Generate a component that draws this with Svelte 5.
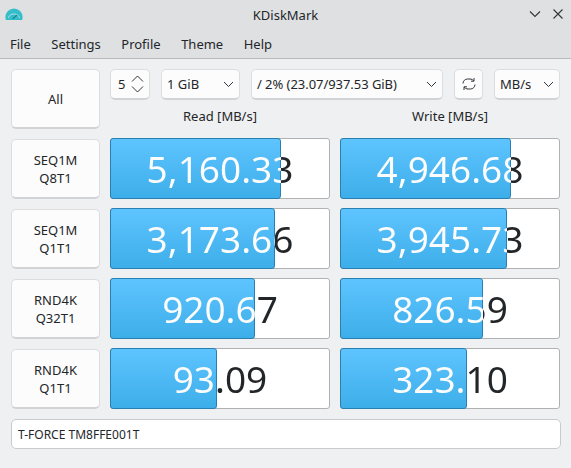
<script>
	const menus = ['File', 'Settings', 'Profile', 'Theme', 'Help'];
	const rows = [
		{ label: ['SEQ1M', 'Q8T1'], read: '5,160.33', readW: 171, write: '4,946.68', writeW: 171 },
		{ label: ['SEQ1M', 'Q1T1'], read: '3,173.66', readW: 165, write: '3,945.73', writeW: 167 },
		{ label: ['RND4K', 'Q32T1'], read: '920.67', readW: 145, write: '826.59', writeW: 143 },
		{ label: ['RND4K', 'Q1T1'], read: '93.09', readW: 107, write: '323.10', writeW: 127 }
	];
</script>

{#snippet bar(value, w)}
	<div class="bar">
		<div class="fill" style="width: {w}px"></div>
		<span class="value" style="--split: {w - 1}px">{value}</span>
	</div>
{/snippet}

<div class="window">
	<header class="titlebar">
		<svg class="logo" width="18" height="12" viewBox="0 0 18 12">
			<circle cx="9" cy="9" r="8.6" fill="#35bdc9" />
			<path d="M3.2 10 A6.2 6.2 0 0 1 14.8 10" fill="none" stroke="#a5e2e8" stroke-width="1" />
			<path d="M7.5 11 L12 7" stroke="#1f8793" stroke-width="1.3" />
		</svg>
		<span class="title">KDiskMark</span>
		<div class="winbtns">
			<svg width="12" height="12" viewBox="0 0 12 12"><path d="M1 3.5 L6 8.5 L11 3.5" /></svg>
			<svg width="12" height="12" viewBox="0 0 12 12"><path d="M1.5 1.5 L10.5 10.5 M10.5 1.5 L1.5 10.5" /></svg>
		</div>
	</header>
	<nav class="menubar">
		{#each menus as m}
			<span class="menu">{m}</span>
		{/each}
	</nav>

	<main class="content">
		<div class="grid">
			<button class="btn all">All</button>
			<div class="top">
				<div class="controls">
					<div class="box spin">
						<span>5</span>
						<span class="arrows">
							<svg width="13" height="8" viewBox="0 0 13 8"><path d="M1 6.5 L6.5 1 L12 6.5" /></svg>
							<svg width="13" height="8" viewBox="0 0 13 8"><path d="M1 1.5 L6.5 7 L12 1.5" /></svg>
						</span>
					</div>
					<div class="box combo size">
						<span>1 GiB</span>
						<svg class="chev" width="11" height="7" viewBox="0 0 11 7"><path d="M1 1 L5.5 5.5 L10 1" /></svg>
					</div>
					<div class="box combo drive">
						<span>/ 2% (23.07/937.53 GiB)</span>
						<svg class="chev" width="11" height="7" viewBox="0 0 11 7"><path d="M1 1 L5.5 5.5 L10 1" /></svg>
					</div>
					<div class="box refresh">
						<svg width="14" height="14" viewBox="0 0 14 14">
							<path d="M1 6.5 A4.5 4.5 0 0 1 5.5 2 H8 A4 4 0 0 1 11.8 4 M12 1 V4.2 H9" />
							<path d="M13 7.5 A4.5 4.5 0 0 1 8.5 12 H6 A4 4 0 0 1 2.2 10 M2 13 V9.8 H5" />
						</svg>
					</div>
					<div class="box combo unit">
						<span>MB/s</span>
						<svg class="chev" width="11" height="7" viewBox="0 0 11 7"><path d="M1 1 L5.5 5.5 L10 1" /></svg>
					</div>
				</div>
				<div class="heads">
					<span>Read [MB/s]</span>
					<span>Write [MB/s]</span>
				</div>
			</div>

			{#each rows as row}
				<button class="btn label">{row.label[0]}<br />{row.label[1]}</button>
				<div class="bars">
					{@render bar(row.read, row.readW)}
					{@render bar(row.write, row.writeW)}
				</div>
			{/each}
		</div>
		<div class="device">T-FORCE TM8FFE001T</div>
	</main>
</div>

<style>
	:global(body) {
		margin: 0;
		font-family: 'Noto Sans', sans-serif;
		font-size: 13px;
		color: #232629;
		background: #eff0f1;
	}

	.window {
		width: 571px;
		height: 468px;
		display: flex;
		flex-direction: column;
		overflow: hidden;
	}

	.titlebar {
		height: 30px;
		background: #dee0e2;
		display: flex;
		align-items: center;
		justify-content: center;
		position: relative;
	}

	.logo {
		position: absolute;
		left: 5px;
		top: 8px;
	}

	.winbtns {
		position: absolute;
		right: 7px;
		top: 8px;
		display: flex;
		gap: 11px;
	}

	.winbtns svg path {
		fill: none;
		stroke: #31363b;
		stroke-width: 1.1;
	}

	.menubar {
		height: 28px;
		background: #dee0e2;
		border-bottom: 1px solid #b9bbbd;
		display: flex;
		align-items: center;
		padding-left: 10px;
		gap: 20.5px;
	}

	.content {
		flex: 1;
		padding: 10px 10px 0 11px;
		display: flex;
		flex-direction: column;
	}

	.grid {
		display: grid;
		grid-template-columns: 89px 1fr;
		column-gap: 10px;
		grid-template-rows: repeat(5, 60px);
		row-gap: 10px;
	}

	.btn {
		font: inherit;
		color: inherit;
		background: #fcfcfc;
		border: 1px solid #dcdddf;
		border-bottom: 2px solid #d2d3d5;
		border-radius: 5px;
		padding: 0;
		line-height: 18px;
	}

	.top {
		display: flex;
		flex-direction: column;
	}

	.controls {
		display: flex;
		gap: 11px;
		height: 31px;
	}

	.box {
		background: #fcfcfc;
		border: 1px solid #dcdddf;
		border-bottom: 2px solid #d2d3d5;
		border-radius: 5px;
		box-sizing: border-box;
		display: flex;
		align-items: center;
	}

	.box svg path {
		fill: none;
		stroke: #31363b;
		stroke-width: 1;
	}

	.spin {
		width: 40px;
		padding-left: 7px;
		justify-content: space-between;
		padding-right: 5px;
	}

	.arrows {
		display: flex;
		flex-direction: column;
		gap: 2px;
	}

	.arrows svg {
		display: block;
	}

	.combo {
		justify-content: space-between;
		padding: 0 5px 0 5px;
	}

	.size {
		width: 79px;
	}

	.drive {
		width: 192px;
	}

	.drive span {
		letter-spacing: -0.05px;
	}

	.refresh {
		width: 29px;
		justify-content: center;
	}

	.unit {
		width: 66px;
	}

	.heads {
		display: grid;
		grid-template-columns: 220px 220px;
		column-gap: 10px;
		text-align: center;
		margin-top: 7px;
	}

	.bars {
		display: grid;
		grid-template-columns: 220px 220px;
		column-gap: 10px;
		margin-top: -1px;
	}

	.bar {
		position: relative;
		height: 61px;
		box-sizing: border-box;
		background: #fff;
		border: 1px solid #b0b1b3;
		border-radius: 3px;
	}

	.fill {
		position: absolute;
		left: -1px;
		top: -1px;
		bottom: -1px;
		box-sizing: border-box;
		background: linear-gradient(#5ec4ff, #3daee9);
		border: 1px solid #2980b0;
		border-radius: 3px;
	}

	/* one text, two colours: the split follows the fill's right edge */
	.value {
		position: absolute;
		inset: 0;
		display: flex;
		align-items: center;
		justify-content: center;
		font-size: 37px;
		white-space: nowrap;
		color: transparent;
		background: linear-gradient(90deg, #fcfcfc var(--split), #232629 var(--split));
		background-clip: text;
		-webkit-background-clip: text;
	}

	.device {
		height: 30px;
		box-sizing: border-box;
		margin-top: 10px;
		background: #fff;
		border: 1px solid #c9cacc;
		border-radius: 5px;
		padding: 0 6px;
		display: flex;
		align-items: center;
		font-size: 12px;
	}
</style>
